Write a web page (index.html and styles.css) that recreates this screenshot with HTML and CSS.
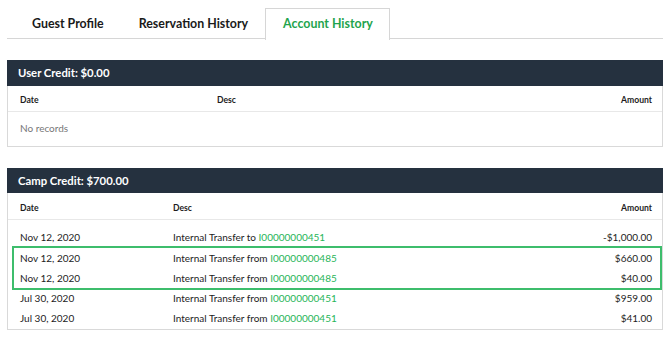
FILE: index.html
```html
<!DOCTYPE html>
<html>
<head>
<meta charset="utf-8">
<link rel="stylesheet" href="styles.css">
</head>
<body>
<div class="page">
  <div class="tabs">
    <div class="tab">Guest Profile</div>
    <div class="tab">Reservation History</div>
    <div class="tab active">Account History</div>
  </div>

  <div class="panel panel-user">
    <div class="panel-head">User Credit: $0.00</div>
    <div class="row colhead"><span>Date</span><span>Desc</span><span class="amt">Amount</span></div>
    <div class="empty">No records</div>
  </div>

  <div class="panel panel-camp">
    <div class="panel-head">Camp Credit: $700.00</div>
    <div class="row colhead"><span>Date</span><span>Desc</span><span class="amt">Amount</span></div>
    <div class="rows">
      <div class="row"><span>Nov 12, 2020</span><span>Internal Transfer to <a class="link">I00000000451</a></span><span class="amt">-$1,000.00</span></div>
      <div class="highlight">
        <div class="row"><span>Nov 12, 2020</span><span>Internal Transfer from <a class="link">I00000000485</a></span><span class="amt">$660.00</span></div>
        <div class="row"><span>Nov 12, 2020</span><span>Internal Transfer from <a class="link">I00000000485</a></span><span class="amt">$40.00</span></div>
      </div>
      <div class="row"><span>Jul 30, 2020</span><span>Internal Transfer from <a class="link">I00000000451</a></span><span class="amt">$959.00</span></div>
      <div class="row"><span>Jul 30, 2020</span><span>Internal Transfer from <a class="link">I00000000451</a></span><span class="amt">$41.00</span></div>
    </div>
  </div>
</div>
</body>
</html>
```

FILE: styles.css
```css
* { box-sizing: border-box; }
body {
  margin: 0;
  background: #fff;
  font-family: Lato, "Noto Sans", sans-serif;
  color: #1d1d1d;
}
.page {
  padding: 8px 7px 0 7px;
}
.tabs {
  display: flex;
  border-bottom: 1px solid #d6d6d6;
  height: 31px;
  padding-left: 7px;
}
.tab {
  padding: 0 16px 0 17px;
  height: 31px;
  line-height: 29px;
  font-size: 12.4px;
  font-weight: 700;
  color: #1a1a1a;
  border: 1px solid transparent;
  border-bottom: none;
}
.tab.active {
  color: #1fa44d;
  border-color: #d6d6d6;
  background: #fff;
  margin-bottom: -1px;
  height: 32px;
}
.panel {
  border: 1px solid #d9d9d9;
  border-top: none;
  margin-top: 21px;
}
.panel-head {
  background: #25313f;
  color: #fff;
  font-weight: 700;
  font-size: 11.3px;
  height: 26px;
  line-height: 26px;
  padding-left: 11px;
  margin: 0 -1px;
}
.panel-camp .panel-head { height: 25px; line-height: 25px; }
.row {
  display: grid;
  align-items: center;
  height: 20.75px;
  padding: 0 10px 0 12px;
  font-size: 10px;
}
.panel-user .row { grid-template-columns: 197px 1fr auto; }
.panel-camp .row { grid-template-columns: 153px 1fr auto; }
.row.colhead {
  height: 26px;
  font-size: 8.6px;
  font-weight: 700;
  border-bottom: 1px solid #e8e8e8;
  padding-top: 3px;
}
.amt { text-align: right; }
.empty {
  height: 34px;
  line-height: 33px;
  padding-left: 12px;
  font-size: 10px;
  color: #777;
}
.rows { padding-top: 7px; }
.panel-camp .colhead { height: 27px; }
.highlight {
  border: 2px solid #3dbd6c;
  margin: -2px 0 -3px 4px;
}
.highlight .row {
  height: 20.25px;
  padding-left: 6px;
  padding-right: 8px;
}
.link { color: #27b559; text-decoration: none; }
```
